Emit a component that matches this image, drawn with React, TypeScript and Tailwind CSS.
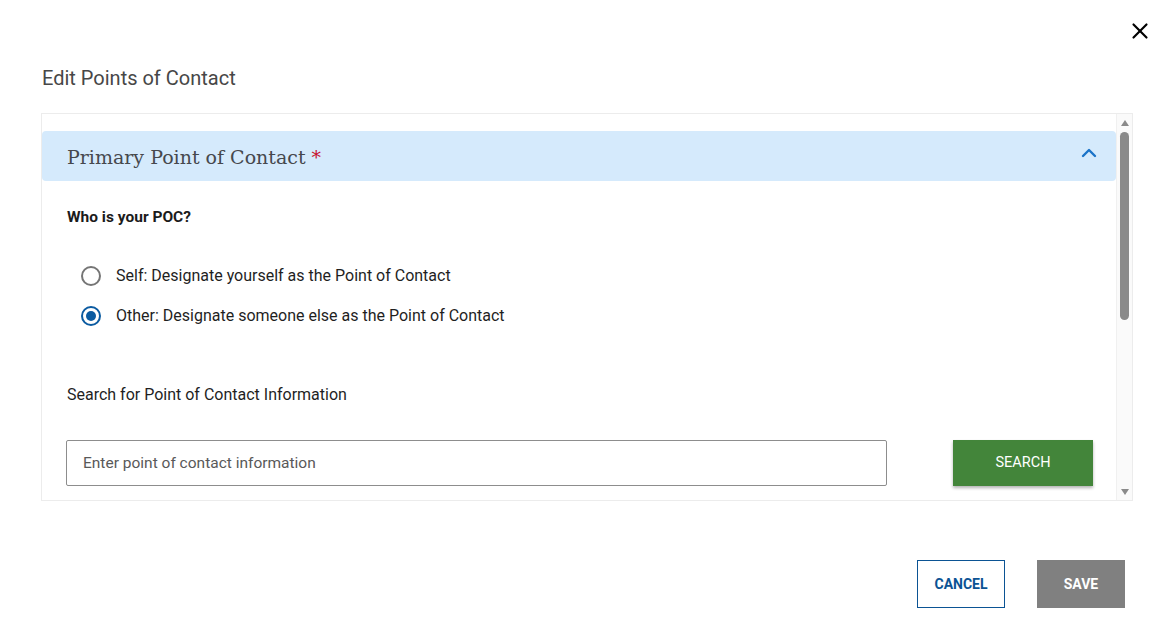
import { X, ChevronUp } from 'lucide-react';

const sans = { fontFamily: 'Roboto, "Liberation Sans", sans-serif' };

const RadioOption = ({ label, checked }: { label: string; checked?: boolean }) => (
  <label className="flex items-center h-5 gap-[15px]">
    <span
      className={`w-5 h-5 rounded-full border-2 flex items-center justify-center shrink-0 ${
        checked ? 'border-[#0b5ba1]' : 'border-[#757575]'
      }`}
    >
      {checked && <span className="w-[10px] h-[10px] rounded-full bg-[#0b5ba1]" />}
    </span>
    <span className="text-[16px] text-[#1f1f1f]">{label}</span>
  </label>
);

const FakeScrollbar = () => (
  <div className="w-[16px] shrink-0 bg-[#fafafa] border-l border-[#f0f0f0] flex flex-col items-center">
    <div className="mt-[6px] w-0 h-0 border-l-[4px] border-r-[4px] border-b-[6px] border-l-transparent border-r-transparent border-b-[#8a8a8a]" />
    <div className="mt-[6px] w-[9px] h-[188px] rounded-full bg-[#8a8a8a]" />
    <div className="flex-1" />
    <div className="mb-[5px] w-0 h-0 border-l-[4px] border-r-[4px] border-t-[6px] border-l-transparent border-r-transparent border-t-[#8a8a8a]" />
  </div>
);

export default function App() {
  return (
    <div className="w-[1170px] h-[630px] bg-white relative" style={sans}>
      <button className="absolute top-[18px] left-[1127px] text-black">
        <X size={26} strokeWidth={2} />
      </button>

      <div className="pt-[66px] pl-[41px] pr-[37px]">
        <h2 className="text-[20px] leading-6 text-[#474747] pl-[1px]">Edit Points of Contact</h2>

        <div className="mt-[23px] h-[388px] border border-[#ececec] flex overflow-hidden">
          <div className="flex-1 overflow-hidden">
            <div className="mt-[17px] h-[50px] bg-[#d5eafc] rounded-[4px] flex items-center justify-between pl-[25px] pr-[15px]">
              <h3
                className="text-[19px] text-[#46484d] pt-[3px]"
                style={{ fontFamily: '"DejaVu Serif", "Liberation Serif", serif' }}
              >
                Primary Point of Contact <span className="text-[#c8102e]">*</span>
              </h3>
              <ChevronUp size={24} strokeWidth={2.4} className="text-[#1a73c8] -mt-[6px]" />
            </div>

            <div className="pl-[25px] pr-[16px]">
              <p className="mt-[26px] text-[15.5px] leading-5 font-bold text-[#1b1b1b]">Who is your POC?</p>

              <div className="mt-[39px] pl-[14px] flex flex-col gap-5">
                <RadioOption label="Self: Designate yourself as the Point of Contact" />
                <RadioOption label="Other: Designate someone else as the Point of Contact" checked />
              </div>

              <p className="mt-[59px] text-[16px] leading-5 text-[#1f1f1f]">Search for Point of Contact Information</p>

              <div className="mt-[35px] -ml-[1px] flex items-center">
                <input
                  type="text"
                  placeholder="Enter point of contact information"
                  className="shrink-0 w-[821px] h-[46px] border border-[#8d8d8d] rounded-[2px] px-4 text-[15.5px] text-[#1f1f1f] placeholder:text-[#595959] focus:outline-none"
                  style={sans}
                />
                <button className="shrink-0 ml-[66px] w-[140px] h-[46px] bg-[#43853a] text-white text-[14.5px] uppercase shadow-[0_2px_3px_rgba(0,0,0,0.3)]">
                  Search
                </button>
              </div>
              <div className="h-[200px]" />
            </div>
          </div>
          <FakeScrollbar />
        </div>

        <div className="mt-[59px] flex justify-end gap-8 pr-[8px]">
          <button className="w-[88px] h-[48px] border border-[#0b5394] text-[#0b5394] text-[14px] font-bold uppercase">
            Cancel
          </button>
          <button className="w-[88px] h-[48px] bg-[#808080] text-white text-[14px] font-bold uppercase">
            Save
          </button>
        </div>
      </div>
    </div>
  );
}
